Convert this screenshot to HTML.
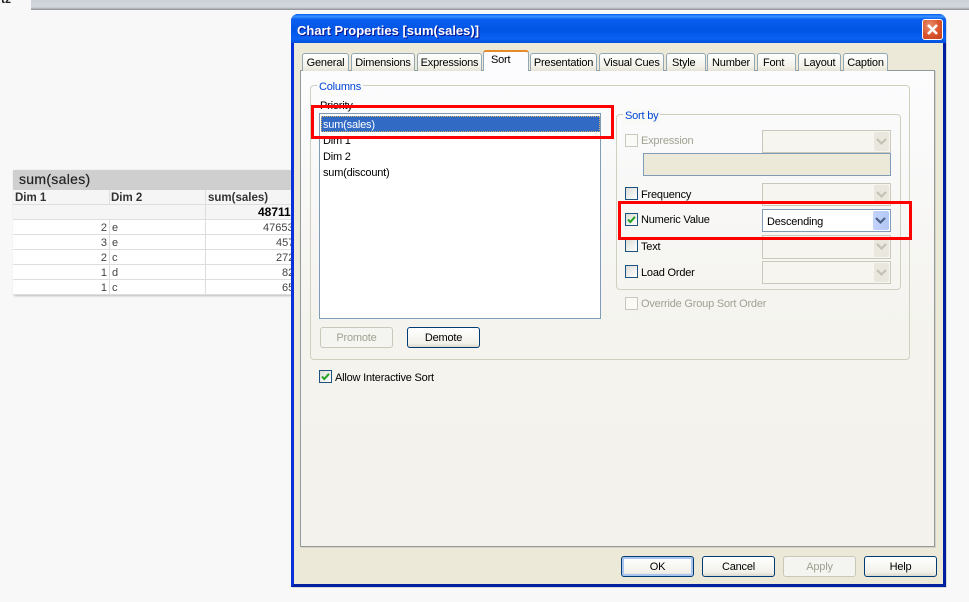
<!DOCTYPE html>
<html><head><meta charset="utf-8"><style>
html,body{margin:0;padding:0}
body{width:969px;height:602px;overflow:hidden;background:#f8f8f8;position:relative;font-family:"Liberation Sans",sans-serif;font-size:11px;letter-spacing:-.2px;color:#000}
.a,.t,.cb,.c,.b,.tab,.ln{position:absolute;box-sizing:border-box}
.t{white-space:nowrap;line-height:14px;margin-top:1px}
.tab{top:53px;height:18px;border:1px solid #91a7b4;border-bottom:none;border-radius:3px 3px 0 0;background:linear-gradient(#fff,#f3f2ea 70%,#e6e3d6);text-align:center;line-height:18px;white-space:nowrap}
.cb{left:625px;width:13px;height:13px;border:1px solid #1c5180;background:linear-gradient(135deg,#dcdcd7,#fff)}
.cb.d{border-color:#cac8bb;background:#fafaf6}
.c{left:762px;width:129px;border:1px solid #cac8bb;background:#f6f5f0}
.c i{position:absolute;right:1px;top:1px;bottom:1px;width:15px;background:#e9e7de;border-radius:2px}
.c svg,.chk{position:absolute}
.c i svg{left:2px;top:50%;margin-top:-4px}
.b{top:556px;width:73px;height:21px;border:1px solid #003c74;border-radius:3px;background:linear-gradient(#fff,#f2f1ea 80%,#dcd8cc);text-align:center;line-height:20px}
.b.d{border-color:#cac8bb;background:#f4f4f0;color:#a1a192}
.grp{position:absolute;box-sizing:border-box;border:1px solid #d0d0bf;border-radius:4px}
.lg{position:absolute;color:#0046d5;background:#f9f9f6;padding:0 2px;line-height:14px;white-space:nowrap;margin-top:1px}
.d{color:#a1a192}
.ln{background:#dedede}
.r{text-align:right}
.g{color:#444;letter-spacing:0}
.h{font-weight:bold;font-size:11.5px;color:#333;letter-spacing:0}
</style></head><body>

<div class="a" style="left:31px;top:0;width:938px;height:10px;background:linear-gradient(#cdd2da,#d2d7de 70%,#a3a6aa 92%,#85888b)"></div>
<div class="t" style="left:1px;top:-9px;font-weight:bold;font-size:12px;color:#222;letter-spacing:0">tz</div>

<div class="a" style="left:13px;top:170px;width:285px;height:125px;background:#fff;box-shadow:1px 1px 2px #bbb"></div>
<div class="a" style="left:13px;top:170px;width:285px;height:20px;background:#cfcfcf"></div>
<div class="t" style="left:19px;top:171px;font-size:14px;color:#222;letter-spacing:.3px;-webkit-text-stroke:.2px #222">sum(sales)</div>
<div class="a" style="left:13px;top:190px;width:285px;height:30px;background:#f5f5f5"></div>
<div class="ln" style="left:13px;top:204px;width:285px;height:1px"></div>
<div class="ln" style="left:13px;top:219px;width:285px;height:1px"></div>
<div class="ln" style="left:13px;top:234px;width:285px;height:1px"></div>
<div class="ln" style="left:13px;top:249px;width:285px;height:1px"></div>
<div class="ln" style="left:13px;top:264px;width:285px;height:1px"></div>
<div class="ln" style="left:13px;top:279px;width:285px;height:1px"></div>
<div class="ln" style="left:13px;top:294px;width:285px;height:1px"></div>
<div class="ln" style="left:109px;top:190px;width:1px;height:14px"></div>
<div class="ln" style="left:109px;top:220px;width:1px;height:75px"></div>
<div class="ln" style="left:205px;top:190px;width:1px;height:105px"></div>
<div class="t h" style="left:15px;top:190px">Dim 1</div>
<div class="t h" style="left:111px;top:190px">Dim 2</div>
<div class="t h" style="left:208px;top:190px">sum(sales)</div>
<div class="t" style="left:258px;top:204px;font-weight:bold;font-size:12px;letter-spacing:0">48711</div>
<div class="t r g" style="left:60px;width:47px;top:220px">2</div><div class="t g" style="left:112px;top:220px">e</div><div class="t g" style="left:263px;top:220px">47653</div>
<div class="t r g" style="left:60px;width:47px;top:235px">3</div><div class="t g" style="left:112px;top:235px">e</div><div class="t g" style="left:276px;top:235px">457</div>
<div class="t r g" style="left:60px;width:47px;top:250px">2</div><div class="t g" style="left:112px;top:250px">c</div><div class="t g" style="left:276px;top:250px">272</div>
<div class="t r g" style="left:60px;width:47px;top:265px">1</div><div class="t g" style="left:112px;top:265px">d</div><div class="t g" style="left:282px;top:265px">82</div>
<div class="t r g" style="left:60px;width:47px;top:280px">1</div><div class="t g" style="left:112px;top:280px">c</div><div class="t g" style="left:282px;top:280px">65</div>

<!-- dialog -->
<div class="a" style="left:291px;top:14px;width:655px;height:573px;background:#ece9d8;border:3px solid #0831d9;border-top:none;border-bottom-color:#001ea0;border-right-color:#001ea0;border-radius:7px 7px 0 0;box-shadow:1px 1px 0 #d8d8d8"></div>
<div class="a" style="left:291px;top:14px;width:655px;height:29px;border-radius:7px 7px 0 0;background:linear-gradient(#0058ee 0,#3a93ff 8%,#0a5ff0 18%,#0055e5 55%,#0a60f2 85%,#0350dc 100%)"></div>
<div class="t" style="left:297px;top:23px;font-weight:bold;font-size:13px;color:#fff;text-shadow:1px 1px 0 #0f1089;letter-spacing:0">Chart Properties [sum(sales)]</div>
<div class="a" style="left:922px;top:19px;width:21px;height:21px;border:1px solid #fff;border-radius:3px;background:radial-gradient(circle at 35% 30%,#e9906f,#d9532c 55%,#c2401b)"></div>
<svg class="a" style="left:922px;top:19px" width="21" height="21"><path d="M6 6L15 15M15 6L6 15" stroke="#fff" stroke-width="2.6" fill="none"/></svg>

<!-- tab page -->
<div class="a" style="left:300px;top:70px;width:635px;height:477px;border:1px solid #919b9c;background:linear-gradient(#fcfcfe,#f4f3ee 55%,#f3f2ec);box-shadow:1px 1px 0 #d6d3c5"></div>
<div class="tab" style="left:302px;width:47px">General</div>
<div class="tab" style="left:351px;width:64px">Dimensions</div>
<div class="tab" style="left:417px;width:65px">Expressions</div>
<div class="tab" style="left:483px;top:50px;height:21px;width:46px;background:#fcfcfe;border-color:#91a7b4;border-top:2px solid #e68b2c;line-height:17px;z-index:2;text-align:left;padding-left:7px">Sort</div>
<div class="tab" style="left:530px;width:67px">Presentation</div>
<div class="tab" style="left:599px;width:65px">Visual Cues</div>
<div class="tab" style="left:666px;width:40px;text-align:left;padding-left:5px">Style</div>
<div class="tab" style="left:707px;width:48px">Number</div>
<div class="tab" style="left:757px;width:39px;text-align:left;padding-left:5px">Font</div>
<div class="tab" style="left:798px;width:43px">Layout</div>
<div class="tab" style="left:843px;width:45px">Caption</div>

<div class="grp" style="left:310px;top:85px;width:600px;height:275px"></div>
<div class="lg" style="left:317px;top:79px;background:#fbfbfb">Columns</div>
<div class="t" style="left:320px;top:98px">Priority</div>

<div class="a" style="left:319px;top:113px;width:282px;height:206px;background:#fff;border:1px solid #7f9db9"></div>
<div class="a" style="left:321px;top:116px;width:279px;height:16px;background:#316ac5;outline:1px dotted #d8b26a;outline-offset:-1px"></div>
<div class="t" style="left:323px;top:117px;color:#fff">sum(sales)</div>
<div class="t" style="left:323px;top:133px">Dim 1</div>
<div class="t" style="left:323px;top:149px">Dim 2</div>
<div class="t" style="left:323px;top:165px">sum(discount)</div>

<div class="b d" style="left:320px;top:327px">Promote</div>
<div class="b" style="left:407px;top:327px">Demote</div>

<div class="grp" style="left:616px;top:114px;width:285px;height:176px"></div>
<div class="lg" style="left:623px;top:108px;background:#f8f8f5">Sort by</div>

<div class="cb d" style="top:134px"></div><div class="t d" style="left:641px;top:133px">Expression</div>
<div class="c" style="top:130px;height:23px"><i><svg width="11" height="8"><path d="M1 1L5.5 5.5L10 1" stroke="#c4c2b4" stroke-width="2.2" fill="none"/></svg></i></div>
<div class="a" style="left:643px;top:153px;width:248px;height:23px;background:#ece9d8;border:1px solid #7f9db9"></div>

<div class="cb" style="top:187px"></div><div class="t" style="left:641px;top:187px">Frequency</div>
<div class="c" style="top:183px;height:23px"><i><svg width="11" height="8"><path d="M1 1L5.5 5.5L10 1" stroke="#c4c2b4" stroke-width="2.2" fill="none"/></svg></i></div>

<div class="cb" style="top:213px"></div>
<svg class="chk" style="left:625px;top:213px" width="13" height="13"><path d="M3 6.5L5.3 9L10 3.8" stroke="#21a121" stroke-width="2" fill="none"/></svg>
<div class="t" style="left:641px;top:212px">Numeric Value</div>
<div class="c" style="top:209px;height:23px;background:#fff;border-color:#7f9db9"><i style="background:linear-gradient(90deg,#c3d3fb,#b2c8f6);width:16px"><svg width="11" height="8"><path d="M1 1L5.5 5.5L10 1" stroke="#4d6185" stroke-width="2.2" fill="none"/></svg></i></div>
<div class="t" style="left:767px;top:214px">Descending</div>

<div class="cb" style="top:239px"></div><div class="t" style="left:641px;top:239px">Text</div>
<div class="c" style="top:235px;height:24px"><i><svg width="11" height="8"><path d="M1 1L5.5 5.5L10 1" stroke="#c4c2b4" stroke-width="2.2" fill="none"/></svg></i></div>

<div class="cb" style="top:265px"></div><div class="t" style="left:641px;top:265px">Load Order</div>
<div class="c" style="top:261px;height:23px"><i><svg width="11" height="8"><path d="M1 1L5.5 5.5L10 1" stroke="#c4c2b4" stroke-width="2.2" fill="none"/></svg></i></div>

<div class="cb d" style="top:297px"></div><div class="t d" style="left:641px;top:296px">Override Group Sort Order</div>

<div class="cb" style="left:319px;top:370px"></div>
<svg class="chk" style="left:319px;top:370px" width="13" height="13"><path d="M3 6.5L5.3 9L10 3.8" stroke="#21a121" stroke-width="2" fill="none"/></svg>
<div class="t" style="left:335px;top:370px">Allow Interactive Sort</div>

<!-- red highlights -->
<div class="a" style="left:311px;top:105px;width:303px;height:34px;border:3px solid #f00"></div>
<div class="a" style="left:618px;top:201px;width:294px;height:39px;border:3px solid #f00"></div>

<!-- buttons -->
<div class="b" style="left:621px;box-shadow:inset 0 0 0 2px #a9c4ef">OK</div>
<div class="b" style="left:702px">Cancel</div>
<div class="b d" style="left:783px">Apply</div>
<div class="b" style="left:864px">Help</div>
</body></html>
